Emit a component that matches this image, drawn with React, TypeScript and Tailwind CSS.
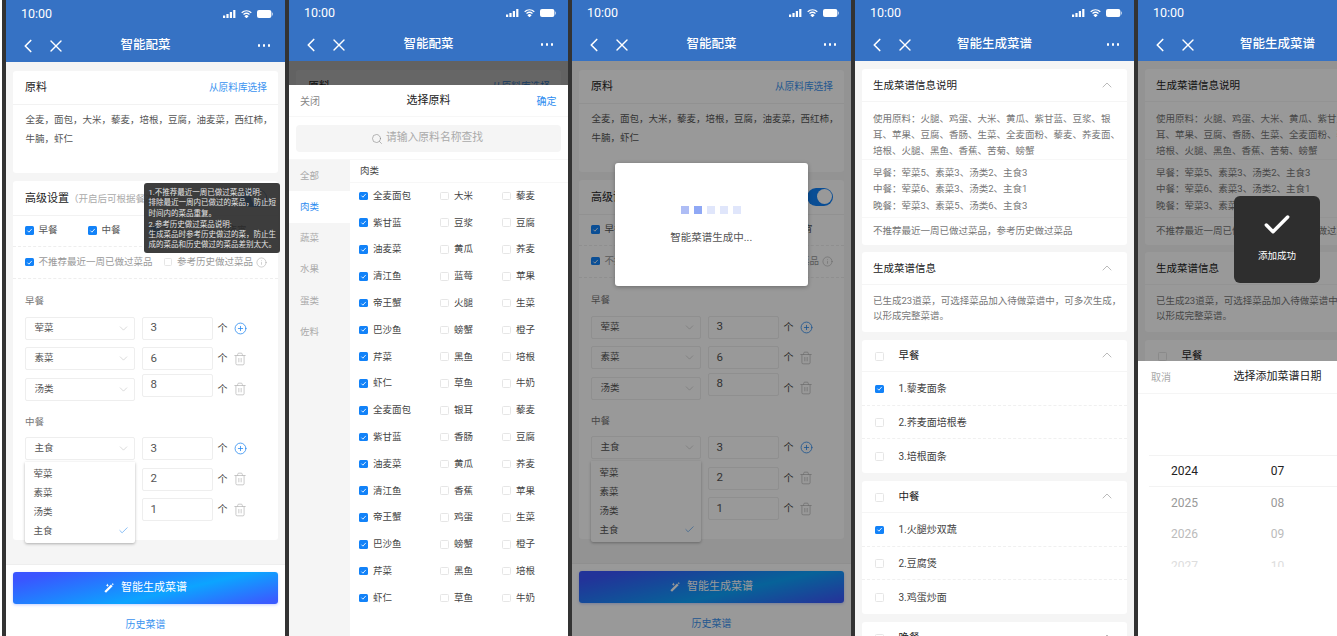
import { useState } from "react";
import { Check, ChevronDown, ChevronLeft, ChevronUp, CirclePlus, Info, Search, Trash2, X } from "lucide-react";

const col1 = ["全麦面包", "紫甘蓝", "油麦菜", "清江鱼", "帝王蟹", "巴沙鱼", "芹菜", "虾仁"];
const col2 = ["大米", "豆浆", "黄瓜", "蓝莓", "火腿", "螃蟹", "黑鱼", "草鱼", "银耳", "香肠", "黄瓜", "香蕉", "鸡蛋", "螃蟹", "黑鱼", "草鱼"];
const col3 = ["藜麦", "豆腐", "荞麦", "苹果", "生菜", "橙子", "培根", "牛奶"];
const sideItems = ["全部", "肉类", "蔬菜", "水果", "蛋类", "佐料"];

function Box({ on = false }: { on?: boolean }) {
  return on ? (
    <span className="flex h-[8.5px] w-[8.5px] shrink-0 items-center justify-center rounded-[1.5px] bg-[#1282f8]">
      <svg width="7" height="7" viewBox="0 0 10 10" fill="none" stroke="#fff" strokeWidth="1.2">
        <path d="M2 5.2 4.2 7.4 8.2 2.8" />
      </svg>
    </span>
  ) : (
    <span className="block h-[8.5px] w-[8.5px] shrink-0 rounded-[1.5px] border border-[#e6e6e6] bg-white" />
  );
}

function StatusBar() {
  return (
    <div className="flex h-[26px] items-center justify-between pl-[15px] pr-[12px] text-[12.5px] text-white">
      <span>10:00</span>
      <div className="flex items-center gap-[5px]">
        <svg width="13" height="8" viewBox="0 0 13 8" fill="#fff">
          <rect x="0" y="5.5" width="2.2" height="2.5" />
          <rect x="3.4" y="4" width="2.2" height="4" />
          <rect x="6.8" y="2" width="2.2" height="6" />
          <rect x="10.2" y="0" width="2.2" height="8" />
        </svg>
        <svg width="11" height="8" viewBox="0 0 11 8" fill="none" stroke="#fff" strokeWidth="1.3">
          <path d="M.7 2.7C3.5.2 7.5.2 10.3 2.7" />
          <path d="M2.5 4.5C4.3 3 6.7 3 8.5 4.5" />
          <path d="M4.3 6.2C5 5.6 6 5.6 6.7 6.2L5.5 7.4Z" fill="#fff" />
        </svg>
        <svg width="16" height="8" viewBox="0 0 16 8" fill="#fff">
          <rect x="0" y="0" width="14.4" height="8" rx="2" />
          <rect x="15" y="2.6" width="1" height="2.8" rx=".5" opacity=".6" />
        </svg>
      </div>
    </div>
  );
}

function Header({ title, tall = false }: { title: string; tall?: boolean }) {
  return (
    <div className={`shrink-0 bg-[#3672c4] ${tall ? "h-[62px] pt-px" : "h-[61px]"}`}>
      <StatusBar />
      <div className="relative flex h-[37px] items-center justify-between pl-[10.5px] pr-[15px] text-white">
        <div className="flex items-center gap-[7.5px]">
          <ChevronLeft size={22} strokeWidth={1.8} />
          <X size={20} strokeWidth={1.6} />
        </div>
        <span className="absolute inset-x-0 text-center text-[12.5px] font-medium">{title}</span>
        <div className="flex gap-[2.5px]">
          <span className="h-[2.5px] w-[2.5px] rounded-full bg-white" />
          <span className="h-[2.5px] w-[2.5px] rounded-full bg-white" />
          <span className="h-[2.5px] w-[2.5px] rounded-full bg-white" />
        </div>
      </div>
    </div>
  );
}

function DishRow({ label, count, add = false, lift = false, open = false }: { label: string; count: string; add?: boolean; lift?: boolean; open?: boolean }) {
  return (
    <div className="relative flex h-[23px] items-center">
      <div className="flex h-[23px] w-[110px] items-center justify-between rounded-[2px] border border-[#eeeeee] pl-[8.5px] pr-[4px] text-[9.5px] text-[#555]">
        <span>{label}</span>
        <ChevronDown size={13} strokeWidth={1} className="text-[#bbb]" />
      </div>
      <div className={`ml-[7px] flex h-[23px] w-[70.5px] items-center rounded-[2px] border border-[#eeeeee] pl-[7.5px] text-[11.5px] text-[#555] ${lift ? "-translate-y-1" : ""}`}>
        {count}
      </div>
      <span className="ml-[5px] w-[10px] text-center text-[10px] text-[#444]">个</span>
      {add ? (
        <CirclePlus size={13} strokeWidth={1.5} className="ml-[6px] text-[#2d8cf0]" />
      ) : (
        <Trash2 size={14} strokeWidth={1.2} className="ml-[5.5px] text-[#b5b5b5]" />
      )}
      {open && (
        <div className="absolute left-0 top-[24.5px] z-10 flex h-[81.5px] w-[110px] flex-col justify-center rounded-b-[2px] bg-white pl-[8.5px] pr-[6px] text-[9.5px] text-[#555] shadow-[0_1px_3px_rgba(0,0,0,0.3)]">
          <span className="h-[19px] leading-[19px]">荤菜</span>
          <span className="h-[19px] leading-[19px]">素菜</span>
          <span className="h-[19px] leading-[19px]">汤类</span>
          <span className="flex h-[19px] items-center justify-between">
            主食
            <Check size={11} strokeWidth={1.3} className="text-[#3a93f0]" />
          </span>
        </div>
      )}
    </div>
  );
}

function BottomBar() {
  return (
    <div className="shrink-0 border-t border-[#eeeeee] bg-white px-[7px] pt-[7px]">
      <div className="flex h-[32px] items-center justify-center gap-[7px] rounded-[3px] bg-[linear-gradient(167deg,#3a55ff_10%,#0ca4ff_60%,#3a5cff_95%)] text-[11px] text-white shadow-[0_1px_3px_rgba(60,100,255,0.3)]">
        <svg width="10" height="10" viewBox="0 0 10 10" fill="#fff">
          <path d="M7 1.6 8.6 3.2 2 9.8.4 8.2Z" />
          <path d="M3.4.6 3.9 1.8 5 2.3 3.9 2.8 3.4 4 2.9 2.8 1.8 2.3 2.9 1.8Z" />
          <path d="M8.8 0 9.2.8 10 1.2 9.2 1.6 8.8 2.4 8.4 1.6 7.6 1.2 8.4.8Z" />
        </svg>
        智能生成菜谱
      </div>
      <div className="pt-[12.5px] text-center text-[10px] text-[#3a93f0]">历史菜谱</div>
    </div>
  );
}

function ConfigScreen({ tooltip = false, tall = false }: { tooltip?: boolean; tall?: boolean }) {
  return (
    <div className="flex h-full flex-col">
      <Header title="智能配菜" tall={tall} />
      <div className="flex h-[502px] shrink-0 flex-col gap-[8px] bg-[#f5f5f5] px-[7px] pt-[9px]">
        <div className="h-[102px] rounded-[3px] bg-white">
          <div className="flex h-[33.5px] items-center justify-between border-b border-[#f2f2f2] pl-[12px] pr-[11px] pt-[2px]">
            <span className="text-[11px] text-[#222]">原料</span>
            <span className="text-[9.7px] text-[#3a93f0]">从原料库选择</span>
          </div>
          <p className="whitespace-nowrap pl-[12.5px] pt-[5.5px] text-[9.5px] leading-[19px] text-[#555]">
            全麦，面包，大米，藜麦，培根，豆腐，油麦菜，西红柿，
            <br />
            牛腩，虾仁
          </p>
        </div>
        <div className="relative h-[359px] rounded-[3px] bg-white">
          <div className="relative flex h-[34.5px] items-center justify-between border-b border-[#f2f2f2] pl-[12px] pr-[11px]">
            <span className="whitespace-nowrap pt-[2px] text-[11px] text-[#222]">
              高级设置<span className="text-[9.5px] text-[#aaa]">（开启后可根据餐次设置）</span>
            </span>
            <span className="flex h-[18px] w-[26px] items-center justify-end rounded-full bg-[#1282f8] pr-[1.5px]">
              <span className="h-[15px] w-[15px] rounded-full bg-white" />
            </span>
          </div>
          <div className="grid h-[31px] grid-cols-[63px_63px_63px_63px] items-center border-b border-dashed border-[#eeeeee] pl-[12px] text-[9.5px] text-[#555]">
            {["早餐", "中餐", "晚餐"].map((m) => (
              <span key={m} className="flex items-center gap-[5px]">
                <Box on />
                {m}
              </span>
            ))}
            <span className="flex items-center gap-[5px]">
              <Box />
              夜宵
            </span>
          </div>
          <div className="flex h-[32px] items-center border-b border-dashed border-[#eeeeee] pl-[12px] text-[9.5px] text-[#999]">
            <Box on />
            <span className="ml-[5px] w-[125px]">不推荐最近一周已做过菜品</span>
            <Box />
            <span className="ml-[5px]">参考历史做过菜品</span>
            <Info size={11} strokeWidth={1} className="ml-[3px] text-[#999]" />
          </div>
          <div className="px-[12px]">
            <div className="pb-[9px] pt-[15px] text-[9.5px] leading-[14px] text-[#777]">早餐</div>
            <div className="flex flex-col gap-[7.5px]">
              <DishRow label="荤菜" count="3" add />
              <DishRow label="素菜" count="6" />
              <DishRow label="汤类" count="8" lift />
            </div>
            <div className="pb-[8px] pt-[14.5px] text-[9.5px] leading-[14px] text-[#777]">中餐</div>
            <div className="flex flex-col gap-[7.5px]">
              <DishRow label="主食" count="3" add open />
              <DishRow label="素菜" count="2" />
              <DishRow label="汤类" count="1" />
            </div>
          </div>
          {tooltip && (
            <div className="absolute right-[-2px] top-[2px] z-20 h-[70px] w-[136px] whitespace-nowrap rounded-[3px] bg-[rgba(40,40,40,0.9)] pl-[4.5px] pt-[5px] text-[7.5px] leading-[10.3px] text-[#e5e5e5]">
              <p>
                1.不推荐最近一周已做过菜品说明:
                <br />
                排除最近一周内已做过的菜品，防止短
                <br />
                时间内的菜品重复。
              </p>
              <p className="pt-[1px]">
                2.参考历史做过菜品说明:
                <br />
                生成菜品时参考历史做过的菜，防止生
                <br />
                成的菜品和历史做过的菜品差别太大。
              </p>
            </div>
          )}
        </div>
      </div>
      <BottomBar />
    </div>
  );
}

function CardHead({ title, box = false }: { title: string; box?: boolean }) {
  return (
    <div className="flex h-[32.5px] shrink-0 items-center justify-between border-b border-[#f5f5f5] pl-[11px] pr-[12px]">
      <span className="flex items-center pt-[2px] text-[10.5px] text-[#222]">
        {box && (
          <span className="ml-[2px] mr-[15px] flex">
            <Box />
          </span>
        )}
        {title}
      </span>
      <ChevronUp size={16} strokeWidth={1} className="text-[#999]" />
    </div>
  );
}

function MealCard({ title, items }: { title: string; items: [string, boolean][] }) {
  return (
    <div className="h-[133.5px] rounded-[3px] bg-white">
      <CardHead title={title} box />
      {items.map(([name, on], i) => (
        <div key={name} className={`flex h-[33.5px] items-center pl-[13px] pt-[1px] text-[10px] text-[#444] ${i < 2 ? "border-b border-dashed border-[#f0f0f0]" : ""}`}>
          <Box on={on} />
          <span className="ml-[15px]">{name}</span>
        </div>
      ))}
    </div>
  );
}

function MenuScreen() {
  return (
    <div className="flex h-full flex-col">
      <Header title="智能生成菜谱" />
      <div className="flex flex-1 flex-col gap-[7.5px] overflow-hidden bg-[#f5f5f5] px-[7px] pt-[8px]">
        <div className="h-[175.5px] shrink-0 rounded-[3px] bg-white">
          <CardHead title="生成菜谱信息说明" />
          <div className="whitespace-nowrap pl-[11px] text-[9.5px] text-[#777]">
            <p className="-ml-[11px] h-[58.5px] border-b border-[#f7f7f7] pl-[11px] pt-[9px] leading-[16px]">
              使用原料：火腿、鸡蛋、大米、黄瓜、紫甘蓝、豆浆、银
              <br />
              耳、苹果、豆腐、香肠、生菜、全麦面粉、藜麦、荞麦面、
              <br />
              培根、火腿、黑鱼、香蕉、苦菊、螃蟹
            </p>
            <p className="-ml-[11px] h-[57.5px] border-b border-[#f7f7f7] pl-[11px] pt-[5px] leading-[16.3px]">
              早餐：荤菜5、素菜3、汤类2、主食3
              <br />
              中餐：荤菜6、素菜3、汤类2、主食1
              <br />
              晚餐：荤菜3、素菜5、汤类6、主食3
            </p>
            <p className="pt-[5px] leading-[16px]">不推荐最近一周已做过菜品，参考历史做过菜品</p>
          </div>
        </div>
        <div className="h-[80px] shrink-0 rounded-[3px] bg-white">
          <CardHead title="生成菜谱信息" />
          <p className="whitespace-nowrap pl-[11px] pt-[8px] text-[9.5px] leading-[15.7px] text-[#777]">
            已生成23道菜，可选择菜品加入待做菜谱中，可多次生成，
            <br />
            以形成完整菜谱。
          </p>
        </div>
        <div className="shrink-0">
          <MealCard title="早餐" items={[["1.藜麦面条", true], ["2.荞麦面培根卷", false], ["3.培根面条", false]]} />
        </div>
        <div className="shrink-0">
          <MealCard title="中餐" items={[["1.火腿炒双蔬", true], ["2.豆腐煲", false], ["3.鸡蛋炒面", false]]} />
        </div>
        <div className="shrink-0">
          <MealCard title="晚餐" items={[["1.番茄炒蛋", false], ["2.清蒸鱼", false], ["3.青菜汤", false]]} />
        </div>
      </div>
    </div>
  );
}

function PickSheet() {
  const [active] = useState("肉类");
  const rows = Array.from({ length: 16 }, (_, i) => [col1[i % 8], col2[i], col3[i % 8]]);
  return (
    <div className="absolute inset-x-0 bottom-0 top-[85px] z-40 flex flex-col bg-white">
      <div className="relative flex h-[32px] shrink-0 items-center justify-between border-b border-[#f7f7f7] pl-[11px] pr-[11.5px] pt-[2px] text-[10px]">
        <span className="text-[#888]">关闭</span>
        <span className="absolute inset-x-0 text-center text-[11px] text-[#222]">选择原料</span>
        <span className="text-[#2d8cf0]">确定</span>
      </div>
      <div className="shrink-0 px-[7px] pb-[7px] pt-[8px]">
        <div className="flex h-[27px] items-center justify-center gap-[3px] rounded-[4px] bg-[#f5f5f5] pr-[3px] text-[10.8px] text-[#aaa]">
          <Search size={12} strokeWidth={1.2} className="text-[#888]" />
          请输入原料名称查找
        </div>
      </div>
      <div className="flex min-h-0 flex-1 border-t border-[#f7f7f7]">
        <div className="w-[61px] shrink-0 bg-[#f5f5f5]">
          {sideItems.map((s) => (
            <div key={s} className={`flex h-[31.3px] items-center pl-[11px] text-[9.5px] ${s === active ? "bg-white text-[#2d8cf0]" : "text-[#aaa]"}`}>
              {s}
            </div>
          ))}
        </div>
        <div className="min-w-0 flex-1">
          <div className="flex h-[22.5px] items-center border-b border-[#f7f7f7] pl-[10px] pt-[1px] text-[9.5px] text-[#444]">{active}</div>
          <div>
            {rows.map((r, i) => (
              <div key={i} className="grid h-[26.8px] grid-cols-[81px_62px_1fr] items-center pl-[9px] text-[9.5px] text-[#444]">
                <span className="flex items-center gap-[5.5px]">
                  <Box on />
                  {r[0]}
                </span>
                <span className="flex items-center gap-[5.5px]">
                  <Box />
                  {r[1]}
                </span>
                <span className="flex items-center gap-[5.5px]">
                  <Box />
                  {r[2]}
                </span>
              </div>
            ))}
          </div>
        </div>
      </div>
    </div>
  );
}

const pickerCols = [
  ["2024", "2025", "2026", "2027"],
  ["07", "08", "09", "10"],
  ["15", "16", "17", "18"],
];
const pickerColors = ["text-[#222]", "text-[#999]", "text-[#bbb]", "text-[#ddd]"];

function DateSheet() {
  return (
    <div className="absolute inset-x-0 bottom-0 top-[361px] z-40 bg-white">
      <div className="relative flex h-[32.5px] items-center border-b border-[#f5f5f5] pl-[13px] pt-[1px] text-[10px] text-[#aaa]">
        取消
        <span className="absolute inset-x-0 text-center text-[11px] text-[#222]">选择添加菜谱日期</span>
      </div>
      <div className="relative">
        <div className="absolute inset-x-[11px] top-[61.5px] h-[32px] border-y border-[#f3f3f3]" />
        <div className="grid h-[173px] grid-cols-3 overflow-hidden pt-[62px] text-center text-[12px]">
          {pickerCols.map((c, i) => (
            <div key={i}>
              {c.map((v, j) => (
                <div key={v} className={`flex h-[31.5px] items-center justify-center ${pickerColors[j]}`}>
                  {v}
                </div>
              ))}
            </div>
          ))}
        </div>
      </div>
    </div>
  );
}

function Phone({ children }: { children: React.ReactNode }) {
  return (
    <div className="relative h-[636px] w-[283px] shrink-0 overflow-hidden border-l-[4px] border-[#333333] bg-white">{children}</div>
  );
}

export default function App() {
  return (
    <div className="flex h-[636px] w-[1337px] overflow-hidden bg-white pl-[2px] font-['Roboto','Noto_Sans_CJK_SC',sans-serif]">
      <Phone>
        <ConfigScreen tooltip tall />
      </Phone>
      <Phone>
        <ConfigScreen />
        <div className="absolute inset-x-0 bottom-0 top-[61px] z-30 bg-black/60" />
        <PickSheet />
      </Phone>
      <Phone>
        <ConfigScreen />
        <div className="absolute inset-x-0 bottom-0 top-[61px] z-30 bg-black/40" />
        <div className="absolute left-[43px] top-[163px] z-40 flex h-[122.5px] w-[192.5px] flex-col items-center rounded-[3px] bg-white pt-[43px] shadow-[0_1px_4px_rgba(0,0,0,0.3)]">
          <div className="flex gap-[5px]">
            <span className="h-[8px] w-[8px] bg-[#aebdf5]" />
            <span className="h-[8px] w-[8px] bg-[#8fa8f5]" />
            <span className="h-[8px] w-[8px] bg-[#e0e6fb]" />
            <span className="h-[8px] w-[8px] bg-[#e0e6fb]" />
            <span className="h-[8px] w-[8px] bg-[#e0e6fb]" />
          </div>
          <span className="pt-[16px] text-[10.5px] text-[#555]">智能菜谱生成中...</span>
        </div>
      </Phone>
      <Phone>
        <MenuScreen />
      </Phone>
      <Phone>
        <MenuScreen />
        <div className="absolute inset-x-0 bottom-0 top-[61px] z-30 bg-black/40" />
        <div className="absolute left-[96px] top-[196px] z-40 flex h-[87px] w-[86px] flex-col items-center rounded-[6px] bg-[#2e2e2e] pt-[13px] text-[9.5px] text-white">
          <Check size={32} strokeWidth={2.6} />
          <span className="pt-[8px]">添加成功</span>
        </div>
        <DateSheet />
      </Phone>
    </div>
  );
}
